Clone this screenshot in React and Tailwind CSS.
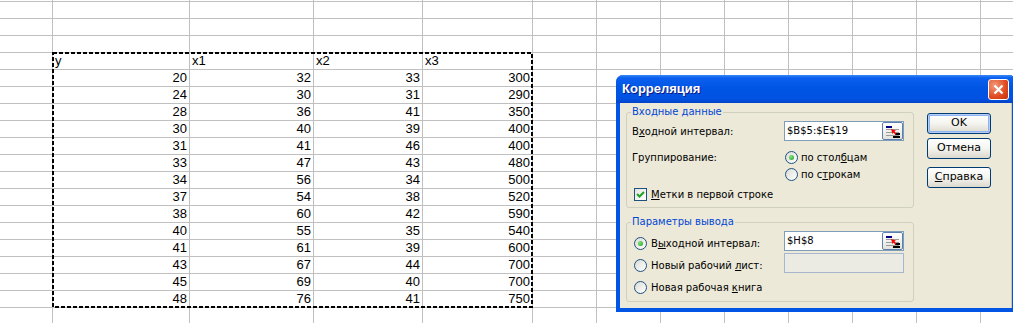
import React from 'react';

const data = [
    [20, 32, 33, 300],
    [24, 30, 31, 290],
    [28, 36, 41, 350],
    [30, 40, 39, 400],
    [31, 41, 46, 400],
    [33, 47, 43, 480],
    [34, 56, 34, 500],
    [37, 54, 38, 520],
    [38, 60, 42, 590],
    [40, 55, 35, 540],
    [41, 61, 39, 600],
    [43, 67, 44, 700],
    [45, 69, 40, 700],
    [48, 76, 41, 750],
];

const headers = ['y', 'x1', 'x2', 'x3'];

const Sheet = () => {
    const cells = [];
    for (let r = 0; r < 20; r++) {
        for (let c = 0; c < 13; c++) {
            let text = '';
            let right = false;
            if (r === 4 && c >= 1 && c <= 4) text = headers[c - 1];
            if (r >= 5 && r <= 18 && c >= 1 && c <= 4) {
                text = data[r - 5][c - 1];
                right = true;
            }
            cells.push(
                <div
                    key={`${r}-${c}`}
                    className={`border-r border-b border-[#c0c0c0] overflow-hidden whitespace-nowrap text-[13px] leading-[16px] ${right ? 'text-right pr-[2px]' : 'pl-[2px]'}`}
                >
                    {text}
                </div>
            );
        }
    }
    return (
        <div className="grid grid-cols-[53px_137px_124px_109px_110px_64px_64px_64px_64px_64px_64px_64px_64px] grid-rows-[2px_repeat(19,17px)] text-black">
            {cells}
        </div>
    );
};

const Radio = ({ checked }) => (
    <span className="w-[13px] h-[13px] shrink-0 rounded-full border border-[#1c5180] bg-gradient-to-br from-[#dcdcd5] to-white flex items-center justify-center">
        {checked && <span className="w-[5px] h-[5px] rounded-full bg-[radial-gradient(circle_at_35%_35%,#7fe27c,#21a121)]" />}
    </span>
);

const Checkbox = () => (
    <span className="w-[13px] h-[13px] shrink-0 border border-[#1c5180] bg-gradient-to-br from-[#e4e4de] to-white flex items-center justify-center">
        <svg width="9" height="9" viewBox="0 0 9 9">
            <path d="M1 4 L3.5 6.5 L8 2" stroke="#21a121" strokeWidth="2" fill="none" />
        </svg>
    </span>
);

const RefButton = () => (
    <span className="w-[21px] h-full shrink-0 rounded-[2px] border border-[#5f7fb3] bg-gradient-to-b from-white to-[#e3e3db] relative">
        <svg width="19" height="18" viewBox="0 0 19 18" className="absolute left-0 top-0">
            <rect x="3" y="3" width="6" height="2" fill="#000080" />
            <rect x="3" y="6" width="13" height="1" fill="#9a9a9a" />
            <rect x="3" y="9" width="13" height="1" fill="#9a9a9a" />
            <rect x="3" y="12" width="13" height="1" fill="#9a9a9a" />
            <rect x="12" y="10" width="5" height="2" fill="#000" />
            <rect x="10" y="13" width="7" height="2" fill="#000" />
            <polygon points="8,6 13,7.5 11.5,8.5 13.5,11 12.5,12 10.5,9.5 9.5,11" fill="#ff0000" />
        </svg>
    </span>
);

const Field = ({ value, disabled }) => (
    <div className={`w-[120px] h-[20px] flex border ${disabled ? 'border-[#a6b7cf] bg-[#ebeae3]' : 'border-[#7f9db9] bg-white'}`}>
        <span className="flex-1 pl-[2px] leading-[18px]">{value}</span>
        {!disabled && <RefButton />}
    </div>
);

const XpButton = ({ children, primary, className = '' }) => (
    <button
        className={`w-[64px] h-[21px] rounded-[3px] border border-[#003c74] bg-gradient-to-b from-white via-[#f4f4f0] to-[#dcd8cc] text-[11px] text-black ${primary ? 'shadow-[inset_0_0_0_1px_#b6cef6,inset_0_0_0_2px_#8cb4f2]' : ''} ${className}`}
    >
        {children}
    </button>
);

const GroupBox = ({ title, className, children }) => (
    <div className={`relative w-[288px] border border-[#d0d0bf] rounded-[3px] ${className}`}>
        <span className="absolute -top-[8px] left-[4px] px-[1px] bg-[#ece9d8] text-[#0046d5] leading-[14px]">{title}</span>
        {children}
    </div>
);

const Dialog = () => (
    <div className="absolute left-[616px] top-[75px] w-[400px] h-[237px] flex flex-col rounded-t-[7px] overflow-hidden bg-[#0055e5] font-['DejaVu_Sans',sans-serif] text-[10px] text-black">
        <div className="h-[28px] shrink-0 flex items-center pl-[6px] pr-[7px] bg-[linear-gradient(to_bottom,#3c8af5_0%,#0b60f0_10%,#0055e5_45%,#0052e2_85%,#0342c8_100%)]">
            <span className="font-['Liberation_Sans',sans-serif] font-bold text-[13px] text-white [text-shadow:1px_1px_#0a1883]">Корреляция</span>
            <span className="ml-auto w-[21px] h-[21px] rounded-[3px] border border-white bg-[radial-gradient(circle_at_30%_30%,#f29a7c,#e04a21_60%,#c1330f)] flex items-center justify-center">
                <svg width="11" height="11" viewBox="0 0 11 11">
                    <path d="M1.5 1.5 L9.5 9.5 M9.5 1.5 L1.5 9.5" stroke="white" strokeWidth="2.2" />
                </svg>
            </span>
        </div>
        <div className="flex-1 mx-[4px] mb-[4px] bg-[#ece9d8] flex border-r border-[#c9c6b5]">
            <div className="pl-[6px] pt-[9px]">
                <GroupBox title="Входные данные" className="h-[96px]">
                    <div className="pl-[5px] pt-[8px]">
                        <div className="flex items-center h-[20px]">
                            <span className="w-[152px]">В<span className="underline">х</span>одной интервал:</span>
                            <Field value="$B$5:$E$19" />
                        </div>
                        <div className="flex items-center h-[17px] mt-[8px]">
                            <span className="w-[153px]">Группирование:</span>
                            <Radio checked />
                            <span className="ml-[3px]">по стол<span className="underline">б</span>цам</span>
                        </div>
                        <div className="flex items-center h-[17px]">
                            <span className="w-[153px]" />
                            <Radio />
                            <span className="ml-[3px]">по с<span className="underline">т</span>рокам</span>
                        </div>
                        <div className="flex items-center h-[17px] mt-[3px] pl-[2px]">
                            <Checkbox />
                            <span className="ml-[4px]"><span className="underline">М</span>етки в первой строке</span>
                        </div>
                    </div>
                </GroupBox>
                <GroupBox title="Параметры вывода" className="h-[80px] mt-[14px]">
                    <div className="pl-[7px] pt-[8px]">
                        <div className="flex items-start h-[20px]">
                            <span className="flex items-center w-[150px] mt-[6px] h-[13px]">
                                <Radio checked />
                                <span className="ml-[4px]">В<span className="underline">ы</span>ходной интервал:</span>
                            </span>
                            <Field value="$H$8" />
                        </div>
                        <div className="flex items-start h-[20px] mt-[2px]">
                            <span className="flex items-center w-[150px] mt-[6px] h-[13px]">
                                <Radio />
                                <span className="ml-[4px]">Новый рабочий <span className="underline">л</span>ист:</span>
                            </span>
                            <Field value="" disabled />
                        </div>
                        <div className="flex items-center h-[13px] mt-[8px]">
                            <Radio />
                            <span className="ml-[4px]">Новая рабочая <span className="underline">к</span>нига</span>
                        </div>
                    </div>
                </GroupBox>
            </div>
            <div className="ml-[13px] pt-[10px] flex flex-col">
                <XpButton primary>OK</XpButton>
                <XpButton className="mt-[4px]">Отмена</XpButton>
                <XpButton className="mt-[8px]"><span className="underline">С</span>правка</XpButton>
            </div>
        </div>
    </div>
);

const App = () => {
    return (
        <div className="relative w-[1013px] h-[323px] overflow-hidden bg-white font-['Liberation_Sans',Arial,sans-serif]">
            <Sheet />
            <svg width="481" height="256" className="absolute left-[52px] top-[52px]">
                <rect x="1" y="1" width="479" height="254" fill="none" stroke="#000" strokeWidth="2" strokeDasharray="4 2" />
            </svg>
            <Dialog />
        </div>
    );
};

export default App;
